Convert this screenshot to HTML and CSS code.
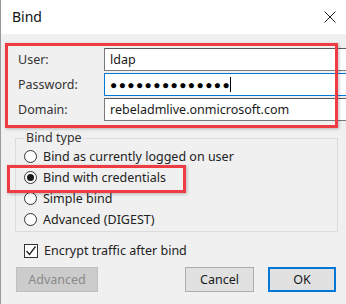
FILE: index.html
```html
<!DOCTYPE html>
<html lang="en">
<head>
  <meta charset="UTF-8" />
  <title>Bind</title>
  <link rel="stylesheet" href="styles.css">
</head>
<body>
  <div class="window">
    <div class="titlebar">
      <span class="title">Bind</span>
      <svg class="close" width="12" height="12" viewBox="0 0 12 12">
        <path d="M0.5 0.5 L11.5 11.5 M11.5 0.5 L0.5 11.5" stroke="#222" stroke-width="1" fill="none" />
      </svg>
    </div>

    <div class="content">
      <div class="creds">
        <label>User:</label>
        <div class="field">ldap</div>
        <label>Password:</label>
        <div class="field focused"><span class="dots">●●●●●●●●●●●●●●</span><span class="caret"></span></div>
        <label>Domain:</label>
        <div class="field">rebeladmlive.onmicrosoft.com</div>
      </div>

      <fieldset class="bind-type">
        <legend>Bind type</legend>
        <div class="option"><span class="radio"></span>Bind as currently logged on user</div>
        <div class="option"><span class="radio checked"></span>Bind with credentials</div>
        <div class="option"><span class="radio"></span>Simple bind</div>
        <div class="option"><span class="radio"></span>Advanced (DIGEST)</div>
      </fieldset>

      <div class="option encrypt">
        <span class="checkbox">
          <svg width="12" height="12" viewBox="0 0 12 12">
            <path d="M1.5 6 L4.5 9.5 L10.5 1.5" stroke="#222" stroke-width="1.3" fill="none" />
          </svg>
        </span>
        Encrypt traffic after bind
      </div>

      <div class="buttons">
        <button class="btn disabled">Advanced</button>
        <button class="btn cancel">Cancel</button>
        <button class="btn default">OK</button>
      </div>
    </div>

    <div class="mark mark-creds"></div>
    <div class="mark mark-option"></div>
  </div>
</body>
</html>
```

FILE: styles.css
```css
* {
  box-sizing: border-box;
}

body {
  margin: 0;
  font-family: 'Noto Sans', 'Open Sans', sans-serif;
  font-size: 12.5px;
  line-height: 16px;
  color: #1a1a1a;
}

.window {
  position: relative;
  width: 346px;
  height: 304px;
  background-color: #f0f0f0;
  border-left: 1px solid #9a9a9a;
  overflow: hidden;
}

.titlebar {
  height: 34px;
  background-color: #ffffff;
  display: flex;
  align-items: center;
  justify-content: space-between;
  padding: 0 10px 0 11px;
}

.title {
  font-size: 14px;
  color: #111;
}

.content {
  padding: 14px 8px 0 14px;
}

.creds {
  display: grid;
  grid-template-columns: 86px 1fr;
  row-gap: 2px;
  margin-left: 3px;
}

.creds label {
  display: flex;
  align-items: center;
  color: #333;
}

.field {
  height: 23px;
  border: 1px solid #7a7a7a;
  border-top-color: #5a5a5a;
  background-color: #fff;
  display: flex;
  align-items: center;
  padding-left: 5px;
  margin-right: -10px;
}

.field.focused {
  border-color: #0078d7;
}

.dots {
  font-size: 12px;
  letter-spacing: 1.4px;
  color: #000;
}

.caret {
  width: 1px;
  height: 15px;
  background-color: #000;
  margin-left: -1px;
}

.bind-type {
  margin: 9px 0 0 0;
  padding: 0 0 1px 8px;
  border: 1px solid #dcdcdc;
  width: 323px;
}

.bind-type legend {
  padding: 0 1px;
  margin-left: 1px;
  color: #333;
}

.option {
  display: flex;
  align-items: center;
  height: 21px;
  color: #222;
}

.radio {
  width: 13px;
  height: 13px;
  border: 1px solid #333;
  border-radius: 50%;
  background-color: #fff;
  margin-right: 6px;
  display: flex;
  align-items: center;
  justify-content: center;
}

.radio.checked::after {
  content: "";
  width: 7px;
  height: 7px;
  border-radius: 50%;
  background-color: #1a1a1a;
}

.encrypt {
  margin: 8px 0 0 9px;
}

.checkbox {
  width: 14px;
  height: 14px;
  border: 1px solid #333;
  background-color: #fff;
  margin-right: 6px;
  display: flex;
  align-items: center;
  justify-content: center;
}

.buttons {
  display: flex;
  margin: 6px 0 0 1px;
}

.btn {
  height: 25px;
  font-family: inherit;
  font-size: 12.5px;
  padding: 0;
  background-color: #e1e1e1;
  border: 1px solid #adadad;
  color: #1a1a1a;
}

.btn.disabled {
  width: 82px;
  background-color: #cccccc;
  border-color: #bfbfbf;
  color: #8a8a8a;
}

.btn.cancel {
  width: 69px;
  margin-left: auto;
  margin-right: 14px;
}

.btn.default {
  width: 68px;
  border: 2px solid #0078d7;
  margin-right: 2px;
}

.mark {
  position: absolute;
  border: 3px solid #ee3b44;
  box-shadow: 1px 1px 3px rgba(0, 0, 0, 0.25);
}

.mark-creds {
  left: 4px;
  top: 43px;
  width: 333px;
  height: 85px;
}

.mark-option {
  left: 6px;
  top: 165px;
  width: 179px;
  height: 28px;
}
```
